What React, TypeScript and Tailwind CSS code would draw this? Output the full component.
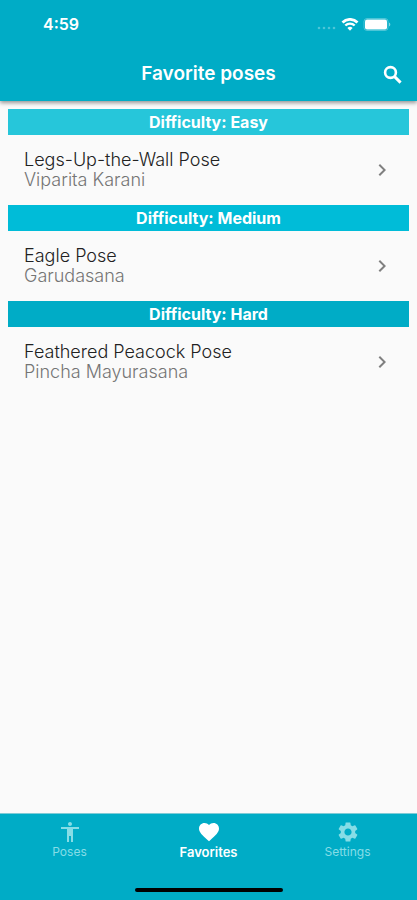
import { useState } from "react";
import {
  MdAccessibility,
  MdChevronRight,
  MdFavorite,
  MdSettings,
} from "react-icons/md";
import { clsx } from "clsx";

interface Pose {
  name: string;
  sanskrit: string;
}

interface PoseGroup {
  difficulty: string;
  color: string;
  poses: Pose[];
}

const groups: PoseGroup[] = [
  {
    difficulty: "Easy",
    color: "bg-[#26c6da]",
    poses: [{ name: "Legs-Up-the-Wall Pose", sanskrit: "Viparita Karani" }],
  },
  {
    difficulty: "Medium",
    color: "bg-[#00bcd8]",
    poses: [{ name: "Eagle Pose", sanskrit: "Garudasana" }],
  },
  {
    difficulty: "Hard",
    color: "bg-[#00acc6]",
    poses: [{ name: "Feathered Peacock Pose", sanskrit: "Pincha Mayurasana" }],
  },
];

const tabs = [
  { label: "Poses", icon: MdAccessibility },
  { label: "Favorites", icon: MdFavorite },
  { label: "Settings", icon: MdSettings },
];

function StatusBar() {
  return (
    <div className="flex h-12 items-center justify-between pr-[26px] pl-[43px]">
      <span className="text-base font-semibold">4:59</span>
      <div className="flex items-center">
        <svg width="20" height="12" viewBox="0 0 20 12" fill="#fff" opacity="0.3">
          <circle cx="2" cy="10" r="1.3" />
          <circle cx="7" cy="10" r="1.3" />
          <circle cx="12" cy="10" r="1.3" />
          <circle cx="17" cy="10" r="1.3" />
        </svg>
        <svg className="ml-1" width="18" height="13" viewBox="0 0 18 13" fill="none" stroke="#fff">
          <path d="M1.5 4.4a10.8 10.8 0 0 1 15 0" strokeWidth="2.8" />
          <path d="M4.3 7.5a6.8 6.8 0 0 1 9.4 0" strokeWidth="2.4" />
          <path d="M9 12.8 6.4 10a3.8 3.8 0 0 1 5.2 0Z" fill="#fff" stroke="none" />
        </svg>
        <svg className="ml-1" width="28" height="13" viewBox="0 0 28 13" fill="none">
          <rect x="1" y="0.5" width="24" height="12" rx="3" stroke="#fff" strokeOpacity="0.3" />
          <rect x="2" y="1.5" width="22" height="10" rx="2" fill="#fff" />
          <path d="M26 4.5v4c1.8-.6 1.8-3.4 0-4Z" fill="#fff" fillOpacity="0.5" />
        </svg>
      </div>
    </div>
  );
}

function SearchIcon() {
  return (
    <svg
      className="size-6"
      viewBox="0 0 24 24"
      fill="none"
      stroke="currentColor"
      strokeWidth="2.6"
    >
      <circle cx="9.5" cy="9.5" r="5.4" />
      <path d="m13.6 13.6 6 6" strokeWidth="2.9" />
    </svg>
  );
}

function PoseRow({ pose }: { pose: Pose }) {
  return (
    <li>
      <button className="flex h-[70px] w-full items-center justify-between pr-[15px] pl-4 text-left">
        <span className="text-lg leading-5 font-light">
          <span className="block text-[#222]">{pose.name}</span>
          <span className="block text-[#757575]">{pose.sanskrit}</span>
        </span>
        <MdChevronRight className="size-6 text-[#808080]" />
      </button>
    </li>
  );
}

export default function App() {
  const [active, setActive] = useState("Favorites");

  return (
    <div className="flex min-h-screen flex-col bg-[#fafafa] font-['Inter',sans-serif]">
      <header className="z-10 bg-[#00acc6] text-white shadow-[0_2px_4px_rgba(0,0,0,0.4)]">
        <StatusBar />
        <div className="grid h-[53px] grid-cols-[1fr_auto_1fr] items-center px-3">
          <h1 className="col-start-2 text-[19px] font-semibold">Favorite poses</h1>
          <button aria-label="Search" className="justify-self-end">
            <SearchIcon />
          </button>
        </div>
      </header>

      <main className="flex-1 px-2 pt-2">
        {groups.map((group) => (
          <section key={group.difficulty}>
            <h2
              className={clsx(
                "text-center text-base leading-[26px] font-bold text-white",
                group.color
              )}
            >
              Difficulty: {group.difficulty}
            </h2>
            <ul>
              {group.poses.map((pose) => (
                <PoseRow key={pose.name} pose={pose} />
              ))}
            </ul>
          </section>
        ))}
      </main>

      <nav className="border-t border-[#7fcbd6] bg-[#00acc6] pb-2">
        <div className="grid h-[74px] grid-cols-3 items-start pt-[6px]">
          {tabs.map(({ label, icon: Icon }) => (
            <button
              key={label}
              onClick={() => setActive(label)}
              className={clsx(
                "flex flex-col items-center",
                active === label
                  ? "text-[13px] font-semibold text-white"
                  : "text-xs text-[#86dde6]"
              )}
            >
              <Icon className="size-6" />
              <span className="leading-4">{label}</span>
            </button>
          ))}
        </div>
        <div className="mx-auto h-1 w-[148px] rounded-full bg-black" />
      </nav>
    </div>
  );
}
